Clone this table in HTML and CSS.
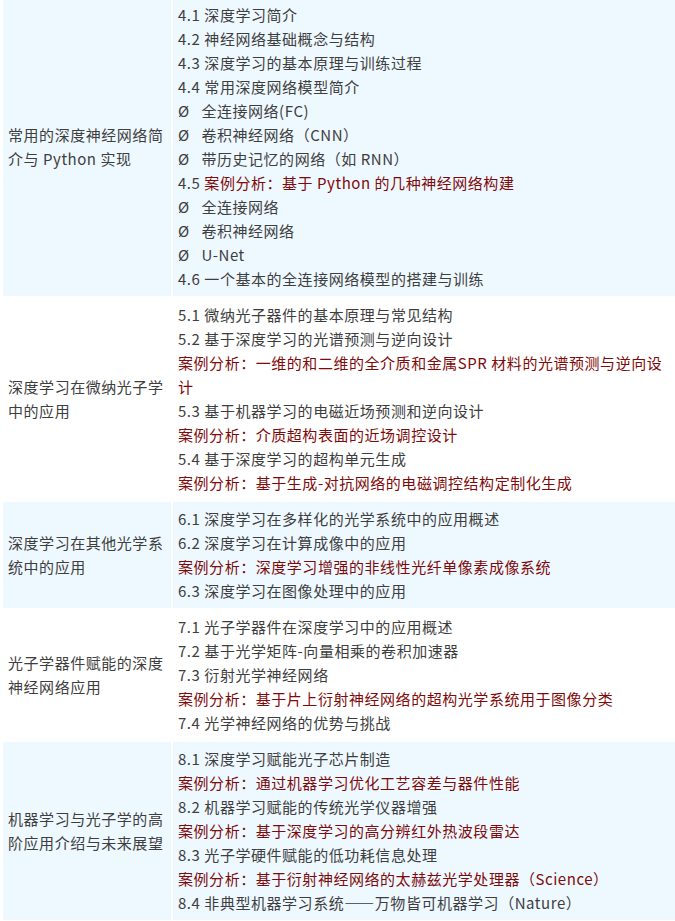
FILE: index.html
```html
<!DOCTYPE html>
<html lang="zh-CN">
<head>
<meta charset="utf-8">
<title>课程大纲</title>
<link rel="stylesheet" href="styles.css">
</head>
<body>
<table class="outline">
  <tr class="row alt">
    <td class="topic">常用的深度神经网络简介与 Python 实现</td>
    <td class="items">
      <div class="line">4.1 深度学习简介</div>
      <div class="line">4.2 神经网络基础概念与结构</div>
      <div class="line">4.3 深度学习的基本原理与训练过程</div>
      <div class="line">4.4 常用深度网络模型简介</div>
      <div class="line">Ø&nbsp;&nbsp; 全连接网络(FC)</div>
      <div class="line">Ø&nbsp;&nbsp; 卷积神经网络（CNN）</div>
      <div class="line">Ø&nbsp;&nbsp; 带历史记忆的网络（如 RNN）</div>
      <div class="line">4.5 <span class="case">案例分析：基于 Python 的几种神经网络构建</span></div>
      <div class="line">Ø&nbsp;&nbsp; 全连接网络</div>
      <div class="line">Ø&nbsp;&nbsp; 卷积神经网络</div>
      <div class="line">Ø&nbsp;&nbsp; U-Net</div>
      <div class="line">4.6 一个基本的全连接网络模型的搭建与训练</div>
    </td>
  </tr>
  <tr class="row">
    <td class="topic">深度学习在微纳光子学中的应用</td>
    <td class="items">
      <div class="line">5.1 微纳光子器件的基本原理与常见结构</div>
      <div class="line">5.2 基于深度学习的光谱预测与逆向设计</div>
      <div class="line case">案例分析：一维的和二维的全介质和金属SPR 材料的光谱预测与逆向设</div>
      <div class="line case">计</div>
      <div class="line">5.3 基于机器学习的电磁近场预测和逆向设计</div>
      <div class="line case">案例分析：介质超构表面的近场调控设计</div>
      <div class="line">5.4 基于深度学习的超构单元生成</div>
      <div class="line case">案例分析：基于生成-对抗网络的电磁调控结构定制化生成</div>
    </td>
  </tr>
  <tr class="row alt">
    <td class="topic">深度学习在其他光学系统中的应用</td>
    <td class="items">
      <div class="line">6.1 深度学习在多样化的光学系统中的应用概述</div>
      <div class="line">6.2 深度学习在计算成像中的应用</div>
      <div class="line case">案例分析：深度学习增强的非线性光纤单像素成像系统</div>
      <div class="line">6.3 深度学习在图像处理中的应用</div>
    </td>
  </tr>
  <tr class="row">
    <td class="topic">光子学器件赋能的深度神经网络应用</td>
    <td class="items">
      <div class="line">7.1 光子学器件在深度学习中的应用概述</div>
      <div class="line">7.2 基于光学矩阵-向量相乘的卷积加速器</div>
      <div class="line">7.3 衍射光学神经网络</div>
      <div class="line case">案例分析：基于片上衍射神经网络的超构光学系统用于图像分类</div>
      <div class="line">7.4 光学神经网络的优势与挑战</div>
    </td>
  </tr>
  <tr class="row alt">
    <td class="topic">机器学习与光子学的高阶应用介绍与未来展望</td>
    <td class="items">
      <div class="line">8.1 深度学习赋能光子芯片制造</div>
      <div class="line case">案例分析：通过机器学习优化工艺容差与器件性能</div>
      <div class="line">8.2 机器学习赋能的传统光学仪器增强</div>
      <div class="line case">案例分析：基于深度学习的高分辨红外热波段雷达</div>
      <div class="line">8.3 光子学硬件赋能的低功耗信息处理</div>
      <div class="line case">案例分析：基于衍射神经网络的太赫兹光学处理器（Science）</div>
      <div class="line">8.4 非典型机器学习系统——万物皆可机器学习（Nature）</div>
    </td>
  </tr>
</table>
</body>
</html>
```

FILE: styles.css
```css
html, body {
  margin: 0;
  padding: 0;
  background: #ffffff;
  overflow: hidden;
}

.outline {
  width: 682px;
  margin: -4px 0 0 1px;
  border-collapse: separate;
  border-spacing: 2px;
  font-family: "Noto Sans CJK SC", "Noto Sans", sans-serif;
  font-size: 15px;
  letter-spacing: 0.544px;
  line-height: 24px;
  color: #3e3e3e;
}

.row.alt td {
  background: #eef8ff;
}

.topic {
  width: 158px;
  padding: 5px;
  vertical-align: middle;
}

.items {
  padding: 5px;
  vertical-align: top;
}

.line {
  white-space: nowrap;
}

.case {
  color: #7f0a0a;
}
```
